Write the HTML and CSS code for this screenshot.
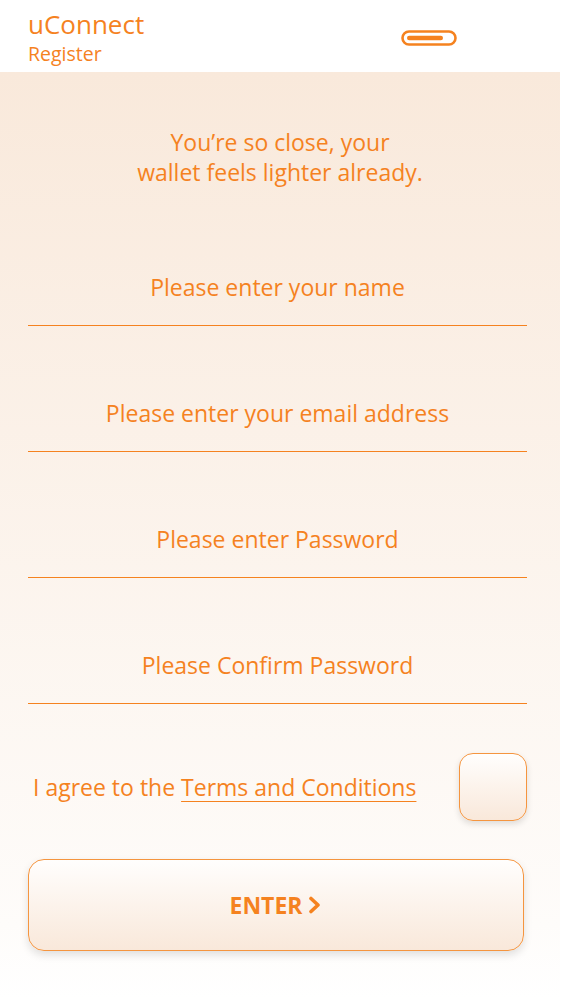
FILE: index.html
```html
<!DOCTYPE html>
<html>
<head lang="en">
    <meta charset="UTF-8">
    <title>uConnect - Register</title>
    <link rel="stylesheet" href="styles.css">
</head>
<body>
<div class="app">
    <div class="header">
        <div class="brand">
            <div class="brand-name">uConnect</div>
            <div class="brand-page">Register</div>
        </div>
        <div class="menu">
            <svg width="56" height="16" viewBox="0 0 56 16">
                <rect x="1.5" y="1.5" width="53" height="13" rx="6.5" fill="none" stroke="#f5821f" stroke-width="2.6"/>
                <rect x="6" y="5.8" width="36" height="4.4" rx="2.2" fill="#f5821f"/>
            </svg>
        </div>
    </div>

    <div class="main">
        <p class="tagline">You’re so close, your<br>wallet feels lighter already.</p>

        <div class="fields">
            <div class="field">Please enter your name</div>
            <div class="field">Please enter your email address</div>
            <div class="field">Please enter Password</div>
            <div class="field">Please Confirm Password</div>
        </div>

        <div class="terms">
            <span class="terms-text">I agree to the <span class="terms-link">Terms and Conditions </span></span>
            <div class="check"></div>
        </div>

        <div class="enter">ENTER <span class="arrow">
            <svg width="14" height="18" viewBox="0 0 14 18">
                <path d="M3 2.5 L10 9 L3 15.5" fill="none" stroke="#f5821f" stroke-width="3.6" stroke-linecap="round" stroke-linejoin="round"/>
            </svg>
        </span></div>
    </div>
</div>
</body>
</html>
```

FILE: styles.css
```css
body, p, div {
    margin: 0;
    padding: 0;
}

body {
    background: #fff;
    font-family: "Open Sans", Lato, sans-serif;
    color: #f5821f;
}

.app {
    width: 560px;
}

.header {
    height: 72px;
    background: #fff;
    display: flex;
    justify-content: space-between;
    align-items: flex-start;
    padding: 0 0 0 28px;
}

.brand-name {
    font-size: 26px;
    line-height: 28px;
    padding-top: 10px;
}

.brand-page {
    font-size: 19.5px;
    line-height: 22px;
    margin-top: 5px;
}

.menu {
    padding: 30px 103px 0 0;
}

.menu svg {
    display: block;
}

.main {
    background: linear-gradient(#f9e9db, #fefcfa 92%, #fff);
    padding: 55px 0 48px;
}

.tagline {
    text-align: center;
    font-size: 23px;
    line-height: 30px;
}

.fields {
    padding: 0 33px 0 28px;
    margin-top: 85px;
}

.field {
    font-size: 23px;
    line-height: 30px;
    text-align: center;
    border-bottom: 1px solid #f5821f;
    padding: 23px 0 23px;
    margin-bottom: 49px;
}

.fields .field:first-child {
    padding-top: 0;
}

.terms {
    display: flex;
    align-items: center;
    justify-content: space-between;
    padding: 0 33px 0 33px;
}

.terms-text {
    font-size: 23px;
    line-height: 30px;
}

.terms-link {
    text-decoration: underline;
    text-decoration-color: #f5821f;
    text-underline-offset: 5px;
    text-decoration-thickness: 1px;
}

.check {
    width: 66px;
    height: 66px;
    border: 1px solid #f5953f;
    border-radius: 14px;
    background: linear-gradient(#fffefd, #f9e8da);
    box-shadow: 0 3px 6px rgba(0, 0, 0, 0.12);
}

.enter {
    margin: 38px 36px 0 28px;
    height: 90px;
    border: 1px solid #f5953f;
    border-radius: 16px;
    background: linear-gradient(#fffefd, #f9e8da);
    box-shadow: 0 4px 8px rgba(0, 0, 0, 0.12);
    display: flex;
    align-items: center;
    justify-content: center;
    font-size: 23px;
    font-weight: bold;
}

.arrow {
    margin-left: 6px;
    display: flex;
}
```
